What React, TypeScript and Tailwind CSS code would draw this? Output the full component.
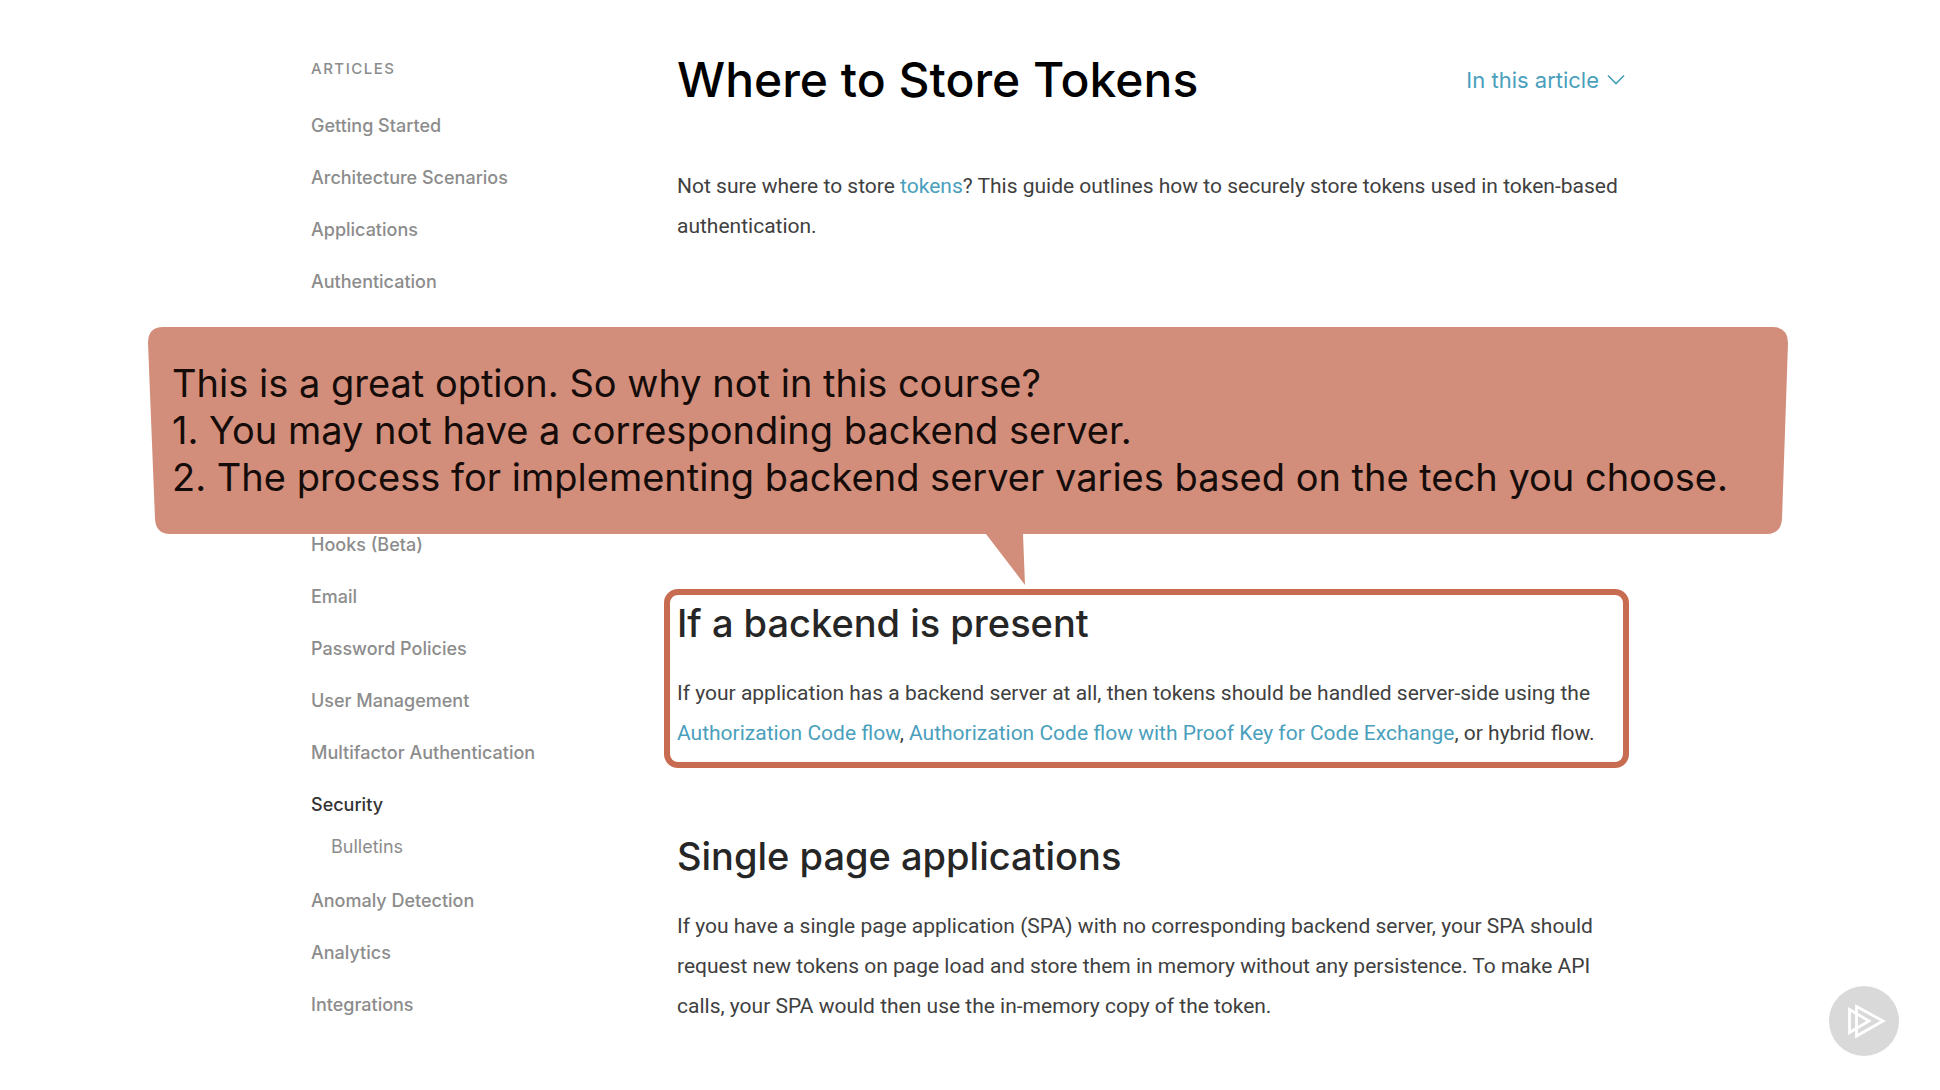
import type { ReactNode } from "react";

const firstArticles = ["Getting Started", "Architecture Scenarios", "Applications", "Authentication"];
const middleArticles = ["Hooks (Beta)", "Email", "Password Policies", "User Management", "Multifactor Authentication"];
const lastArticles = ["Anomaly Detection", "Analytics", "Integrations"];

function NavItem({ label }: { label: string }) {
  return (
    <li className="flex h-[52px] items-center">
      <a href="#">{label}</a>
    </li>
  );
}

function Link({ children }: { children: ReactNode }) {
  return (
    <a href="#" className="text-[#4a9fbc]">
      {children}
    </a>
  );
}

function Sidebar() {
  return (
    <nav aria-label="Articles" className="pt-[7px] font-['Inter',sans-serif] text-[18px] font-medium text-[#8c8c8c]">
      <h2 className="text-[15px] leading-6 tracking-widest">ARTICLES</h2>
      <ul className="mt-[18px]">
        {firstArticles.map((label) => (
          <NavItem key={label} label={label} />
        ))}
      </ul>
      <ul className="mt-[211px]">
        {middleArticles.map((label) => (
          <NavItem key={label} label={label} />
        ))}
        <li className="pb-3">
          <a href="#" className="flex h-[52px] items-center text-[#333333]">
            Security
          </a>
          <ul>
            <li className="flex h-8 items-center pl-5 font-normal">
              <a href="#">Bulletins</a>
            </li>
          </ul>
        </li>
        {lastArticles.map((label) => (
          <NavItem key={label} label={label} />
        ))}
      </ul>
    </nav>
  );
}

function Callout() {
  return (
    <aside className="absolute top-[327px] right-[152px] left-[148px] px-6 pt-[33px] pb-[33px]">
      <svg
        className="absolute top-0 left-0 h-[259px] w-full"
        viewBox="0 0 1640 259"
        preserveAspectRatio="none"
        fill="#d28e7a"
        aria-hidden="true"
      >
        <path d="M15 0H1624Q1640 0 1640 16L1634 192Q1633 207 1618 207H875L877 258L838 207H22Q8 207 7 192L0 16Q0 0 15 0Z" />
      </svg>
      <p className="relative font-['Inter',sans-serif] text-[38px] leading-[47px] whitespace-nowrap text-[#150c0a]">
        This is a great option. So why not in this course?
        <br />
        1. You may not have a corresponding backend server.
        <br />
        2. The process for implementing backend server varies based on the tech you choose.
      </p>
    </aside>
  );
}

export default function App() {
  return (
    <div className="relative min-h-screen bg-white font-['Roboto',sans-serif] text-[#404040]">
      <div className="mx-auto grid max-w-[1318px] grid-cols-[366px_1fr] pt-[50px]">
        <Sidebar />
        <main className="text-[21px] leading-10">
          <header className="flex items-center justify-between pr-1">
            <h1 className="font-['Inter',sans-serif] text-[48px] leading-[60px] font-medium text-black">
              Where to Store Tokens
            </h1>
            <button
              type="button"
              className="flex items-center gap-2 font-['Inter',sans-serif] text-[22px] leading-8 text-[#4a9fbc]"
            >
              In this article
              <svg width="18" height="12" viewBox="0 0 18 12" fill="none" stroke="currentColor" strokeWidth="1.6" aria-hidden="true">
                <path d="M1 1.5L9 9.5L17 1.5" />
              </svg>
            </button>
          </header>
          <p className="mt-14">
            Not sure where to store <Link>tokens</Link>? This guide outlines how to securely store tokens used in
            token-based authentication.
          </p>

          <section className="mt-[343px] -ml-[13px] rounded-[14px] border-6 border-[#c76c50] pt-1 pr-2 pb-[9px] pl-[7px]">
            <h2 className="font-['Inter',sans-serif] text-[38px] leading-[48px] font-medium text-[#262626]">
              If a backend is present
            </h2>
            <p className="mt-[26px]">
              If your application has a backend server at all, then tokens should be handled server-side using the{" "}
              <Link>Authorization Code flow</Link>,{" "}
              <Link>Authorization Code flow with Proof Key for Code Exchange</Link>, or hybrid flow.
            </p>
          </section>

          <section className="mt-16">
            <h2 className="font-['Inter',sans-serif] text-[38px] leading-[48px] font-medium text-[#262626]">
              Single page applications
            </h2>
            <p className="mt-[26px]">
              If you have a single page application (SPA) with no corresponding backend server, your SPA should request
              new tokens on page load and store them in memory without any persistence. To make API calls, your SPA
              would then use the in-memory copy of the token.
            </p>
          </section>
        </main>
      </div>

      <Callout />

      <svg
        className="absolute right-[41px] bottom-[34px] size-[70px]"
        viewBox="0 0 70 70"
        fill="none"
        stroke="white"
        strokeWidth="2.8"
        role="img"
        aria-label="Play"
      >
        <circle cx="35" cy="35" r="35" fill="#d9d9d9" stroke="none" />
        <path d="M27.5 20.5L54 35L27.5 50Z" />
        <path d="M20.5 23.5L40 35L20.5 46.5Z" />
      </svg>
    </div>
  );
}
